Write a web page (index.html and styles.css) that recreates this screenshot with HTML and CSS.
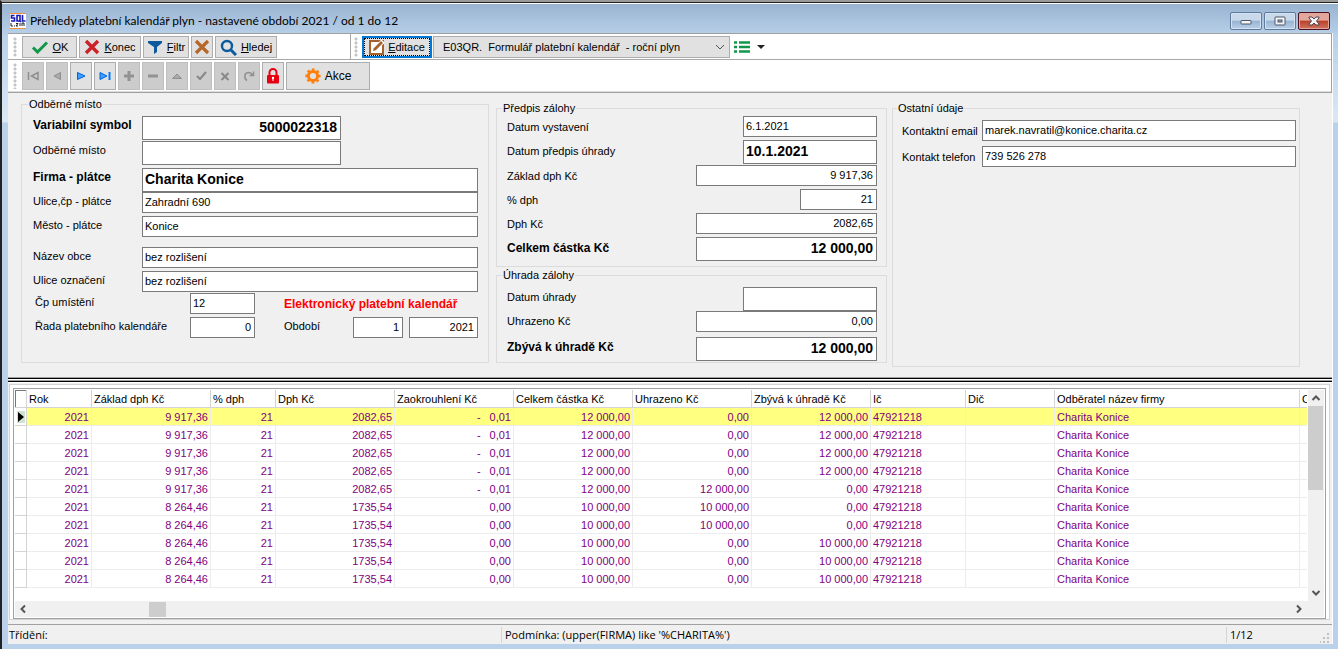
FILE: index.html
```html
<!DOCTYPE html>
<html lang="cs">
<head>
<meta charset="utf-8">
<title>Přehledy platební kalendář plyn</title>
<link rel="stylesheet" href="styles.css">
</head>
<body>
<div class="window">
  <header class="titlebar">
    <svg class="app-icon" width="16" height="16" viewBox="0 0 16 16"><rect width="16" height="16" fill="#fff"/><path d="M0 .5h16M0 15.5h16" stroke="#f0923c"/><path d="M4.500 2.500h-3v2.500h3v3h-3.500M7 2.500h3v5.500h-3zM9 7l2 2M12.500 2v6h3" fill="none" stroke="#1a1ab8" stroke-width="1.600"/><path d="M1 10v3h2M4 13h1M6 10.500h2l-2 2.500h2M10 10v3M12 13v-3h2v3" fill="none" stroke="#222"/></svg>
    <h1 class="title">Přehledy platební kalendář plyn - nastavené období 2021 / od 1 do 12</h1>
    <div class="win-buttons">
      <button class="win-btn" aria-label="Minimalizovat"><svg width="12" height="8" viewBox="0 0 12 8"><rect x="1" y="3.500" width="10" height="3.500" rx=".5" fill="#f4f4f4" stroke="#4c5466"/></svg></button>
      <button class="win-btn" aria-label="Maximalizovat"><svg width="12" height="10" viewBox="0 0 12 10"><rect x="1" y="1" width="10" height="8" rx=".5" fill="#f4f4f4" stroke="#4c5466"/><rect x="4" y="4" width="4" height="2" fill="#8fb0d8" stroke="#4c5466"/></svg></button>
      <button class="win-btn win-close" aria-label="Zavřít"><svg width="12" height="10" viewBox="0 0 12 10"><path d="M1 1h3l2 2 2-2h3v1L8.500 5 11 8v1H8L6 7 4 9H1V8l2.500-3L1 2z" fill="#f4f4f4" stroke="#4c4454"/></svg></button>
    </div>
  </header>

  <main class="client">
    <div class="toolbars">
      <div class="toolbar">
        <div class="band">
          <i class="grip"></i>
          <button class="btn btn-ok"><svg width="18" height="14" viewBox="0 0 18 14"><path d="M2 7.500l4.500 4.500L16 2.500" fill="none" stroke="#109848" stroke-width="3"/></svg><span><u>O</u>K</span></button>
          <button class="btn btn-konec"><svg width="16" height="16" viewBox="0 0 16 16"><path d="M2 2l12 12M14 2L2 14" stroke="#cc2127" stroke-width="3.400"/></svg><span><u>K</u>onec</span></button>
          <button class="btn btn-filtr"><svg width="16" height="14" viewBox="0 0 16 14"><path d="M1 1h14v2l-5 4v5l-3 2V7L1 3z" fill="#0b5a9e"/></svg><span><u>F</u>iltr</span></button>
          <button class="btn btn-x" aria-label="Zrušit filtr"><svg width="16" height="16" viewBox="0 0 16 16"><path d="M2 2l12 12M14 2L2 14" stroke="#b4682b" stroke-width="3.200"/></svg></button>
          <button class="btn btn-hledej"><svg width="17" height="17" viewBox="0 0 17 17"><circle cx="7" cy="7" r="5" fill="none" stroke="#0b5a9e" stroke-width="2.400"/><path d="M11 11l5 5" stroke="#0b5a9e" stroke-width="3"/></svg><span><u>H</u>ledej</span></button>
        </div>
        <div class="band band-right">
          <i class="grip"></i>
          <button class="btn btn-edit"><svg width="15" height="15" viewBox="0 0 15 15"><path d="M1 1h13v13H1z" fill="#fff" stroke="#a5622c" stroke-width="2"/><path d="M4 11.500L14 1" stroke="#fff" stroke-width="4.500"/><path d="M4 11l.8-2.800L12 1l2 2-7.200 7.200z" fill="#a5622c"/></svg><span><u>E</u>ditace</span></button>
          <select class="form-select" aria-label="Formulář"><option>E03QR.&nbsp; Formulář platební kalendář&nbsp; - roční plyn</option></select>
          <button class="list-btn" aria-label="Seznam"><svg width="32" height="14" viewBox="0 0 32 14"><path d="M0 2.500h3M5 2.500h11M0 7h3M5 7h11M0 11.500h3M5 11.500h11" stroke="#109848" stroke-width="2.600"/><path d="M23 5h8l-4 4z" fill="#222"/></svg></button>
        </div>
      </div>
      <div class="toolbar toolbar-nav">
        <i class="grip"></i>
        <button class="nav off" aria-label="První"><svg width="12" height="12" viewBox="0 0 12 12"><path d="M1.500 2v8M11 2.500v7L4.500 6z" fill="none" stroke="#8e8e8e" stroke-width="1.500"/></svg></button>
        <button class="nav off" aria-label="Předchozí"><svg width="12" height="12" viewBox="0 0 12 12"><path d="M9.500 2.500v7L3 6z" fill="#aaa" stroke="#8e8e8e"/></svg></button>
        <button class="nav" aria-label="Další"><svg width="12" height="12" viewBox="0 0 12 12"><path d="M2.500 2.500v7L10 6z" fill="#3da1ff" stroke="#0060e0"/></svg></button>
        <button class="nav" aria-label="Poslední"><svg width="12" height="12" viewBox="0 0 12 12"><path d="M1 2.500v7L8 6z" fill="#3da1ff" stroke="#0060e0"/><path d="M10.500 2v8" stroke="#0878f4" stroke-width="2"/></svg></button>
        <button class="nav off" aria-label="Přidat"><svg width="12" height="12" viewBox="0 0 12 12"><path d="M6 1v10M1 6h10" stroke="#929292" stroke-width="3"/></svg></button>
        <button class="nav off" aria-label="Odebrat"><svg width="12" height="12" viewBox="0 0 12 12"><path d="M1 6h10" stroke="#929292" stroke-width="3"/></svg></button>
        <button class="nav off" aria-label="Upravit"><svg width="12" height="12" viewBox="0 0 12 12"><path d="M1.500 8.500h9L6 4z" fill="#aaa" stroke="#8e8e8e"/></svg></button>
        <button class="nav off" aria-label="Potvrdit"><svg width="12" height="12" viewBox="0 0 12 12"><path d="M2 6l3 3 6-7" fill="none" stroke="#888" stroke-width="2"/></svg></button>
        <button class="nav off" aria-label="Zrušit"><svg width="12" height="12" viewBox="0 0 12 12"><path d="M2.500 3l7 7M9.500 3l-7 7" stroke="#888" stroke-width="2"/></svg></button>
        <button class="nav off" aria-label="Obnovit"><svg width="12" height="12" viewBox="0 0 12 12"><path d="M4 10.500C1 9 1 3 5 2.500c2.500 0 4 1 4.500 3M10.500 1.500v4h-4" fill="none" stroke="#929292" stroke-width="1.600"/></svg></button>
        <button class="nav" aria-label="Zámek"><svg width="14" height="16" viewBox="0 0 14 16"><path d="M3.500 8V4.500a3.500 3.500 0 0 1 7 0V8" fill="none" stroke="#e60012" stroke-width="2"/><rect x="1" y="7" width="12" height="8.500" rx="1" fill="#e60012"/><circle cx="7" cy="10" r="1.200" fill="#fff"/><path d="M7 10v3" stroke="#fff"/></svg></button>
        <button class="btn btn-akce"><svg width="16" height="16" viewBox="0 0 16 16"><circle cx="8" cy="8" r="4.600" fill="none" stroke="#ff7f0a" stroke-width="3"/><circle cx="8" cy="8" r="6.600" fill="none" stroke="#ff7f0a" stroke-width="2" stroke-dasharray="2.800 2.384" stroke-dashoffset="1.400"/></svg><span>Akce</span></button>
      </div>
    </div>

    <form class="form">
      <fieldset class="group group-place">
        <legend>Odběrné místo</legend>
        <div class="row strong"><label for="vs">Variabilní symbol</label><input id="vs" class="w-code num" value="5000022318"></div>
        <div class="row gap-1"><label for="om">Odběrné místo</label><input id="om" class="w-code tall" value=""></div>
        <div class="row gap-3 strong"><label for="firma">Firma - plátce</label><input id="firma" class="grow" value="Charita Konice"></div>
        <div class="row"><label for="ulice">Ulice,čp - plátce</label><input id="ulice" class="grow" value="Zahradní 690"></div>
        <div class="row gap-3"><label for="mesto">Město - plátce</label><input id="mesto" class="grow" value="Konice"></div>
        <div class="row gap-10"><label for="obec">Název obce</label><input id="obec" class="grow" value="bez rozlišení"></div>
        <div class="row gap-3"><label for="uo">Ulice označení</label><input id="uo" class="grow" value="bez rozlišení"></div>
        <div class="row wide gap-1"><label for="cp">Čp umístění</label><input id="cp" class="w-small" value="12"><strong class="notice">Elektronický platební kalendář</strong></div>
        <div class="row wide gap-3"><label for="rada">Řada platebního kalendáře</label><input id="rada" class="w-small num" value="0"><label class="period" for="obd">Období</label><input id="obd" class="w-month num" value="1"><input class="w-year num" aria-label="Rok" value="2021"></div>
      </fieldset>

      <div class="col-mid">
        <fieldset class="group group-sum">
          <legend>Předpis zálohy</legend>
          <div class="row"><label for="dv">Datum vystavení</label><input id="dv" class="w-date" value="6.1.2021"></div>
          <div class="row gap-3 strong-value"><label for="dp">Datum předpis úhrady</label><input id="dp" class="w-date" value="10.1.2021"></div>
          <div class="row gap-1"><label for="zd">Základ dph Kč</label><input id="zd" class="w-sum num" value="9 917,36"></div>
          <div class="row gap-3"><label for="pd">% dph</label><input id="pd" class="w-rate num" value="21"></div>
          <div class="row gap-3"><label for="dk">Dph Kč</label><input id="dk" class="w-sum num" value="2082,65"></div>
          <div class="row gap-3 strong"><label for="cc">Celkem částka Kč</label><input id="cc" class="w-sum num" value="12 000,00"></div>
        </fieldset>
        <fieldset class="group group-sum group-paid">
          <legend>Úhrada zálohy</legend>
          <div class="row"><label for="du">Datum úhrady</label><input id="du" class="w-date tall" value=""></div>
          <div class="row"><label for="uk">Uhrazeno Kč</label><input id="uk" class="w-sum num" value="0,00"></div>
          <div class="row gap-5 strong"><label for="zk">Zbývá k úhradě Kč</label><input id="zk" class="w-sum num" value="12 000,00"></div>
        </fieldset>
      </div>

      <fieldset class="group group-other">
        <legend>Ostatní údaje</legend>
        <div class="row"><label for="em">Kontaktní email</label><input id="em" class="grow" value="marek.navratil@konice.charita.cz"></div>
        <div class="row gap-5"><label for="tel">Kontakt telefon</label><input id="tel" class="grow" value="739 526 278"></div>
      </fieldset>
    </form>

    <div class="splitter"></div>

    <section class="panel">
      <div class="grid-box">
        <div class="grid-view">
          <table class="grid">
            <colgroup><col class="c-mark"><col class="c-year"><col class="c-sum"><col class="c-rate"><col class="c-sum"><col class="c-sum"><col class="c-sum"><col class="c-sum"><col class="c-sum"><col class="c-ic"><col class="c-dic"><col class="c-name"><col></colgroup>
            <thead><tr><th class="corner"></th><th>Rok</th><th>Základ dph Kč</th><th>% dph</th><th>Dph Kč</th><th>Zaokrouhlení Kč</th><th>Celkem částka Kč</th><th>Uhrazeno Kč</th><th>Zbývá k úhradě Kč</th><th>Ič</th><th>Dič</th><th>Odběratel název firmy</th><th>O</th></tr></thead>
            <tbody>
              <tr class="current"><td class="mark"><svg width="10" height="12" viewBox="0 0 10 12"><path d="M2 0h8v12H2z" fill="#cfe3cf"/><path d="M3 1l6 5-6 5z" fill="#000"/></svg></td><td>2021</td><td>9 917,36</td><td>21</td><td>2082,65</td><td><span class="neg">-</span>0,01</td><td>12 000,00</td><td>0,00</td><td>12 000,00</td><td>47921218</td><td></td><td>Charita Konice</td><td></td></tr>
              <tr><td></td><td>2021</td><td>9 917,36</td><td>21</td><td>2082,65</td><td><span class="neg">-</span>0,01</td><td>12 000,00</td><td>0,00</td><td>12 000,00</td><td>47921218</td><td></td><td>Charita Konice</td><td></td></tr>
              <tr><td></td><td>2021</td><td>9 917,36</td><td>21</td><td>2082,65</td><td><span class="neg">-</span>0,01</td><td>12 000,00</td><td>0,00</td><td>12 000,00</td><td>47921218</td><td></td><td>Charita Konice</td><td></td></tr>
              <tr><td></td><td>2021</td><td>9 917,36</td><td>21</td><td>2082,65</td><td><span class="neg">-</span>0,01</td><td>12 000,00</td><td>0,00</td><td>12 000,00</td><td>47921218</td><td></td><td>Charita Konice</td><td></td></tr>
              <tr><td></td><td>2021</td><td>9 917,36</td><td>21</td><td>2082,65</td><td><span class="neg">-</span>0,01</td><td>12 000,00</td><td>12 000,00</td><td>0,00</td><td>47921218</td><td></td><td>Charita Konice</td><td></td></tr>
              <tr><td></td><td>2021</td><td>8 264,46</td><td>21</td><td>1735,54</td><td>0,00</td><td>10 000,00</td><td>10 000,00</td><td>0,00</td><td>47921218</td><td></td><td>Charita Konice</td><td></td></tr>
              <tr><td></td><td>2021</td><td>8 264,46</td><td>21</td><td>1735,54</td><td>0,00</td><td>10 000,00</td><td>10 000,00</td><td>0,00</td><td>47921218</td><td></td><td>Charita Konice</td><td></td></tr>
              <tr><td></td><td>2021</td><td>8 264,46</td><td>21</td><td>1735,54</td><td>0,00</td><td>10 000,00</td><td>0,00</td><td>10 000,00</td><td>47921218</td><td></td><td>Charita Konice</td><td></td></tr>
              <tr><td></td><td>2021</td><td>8 264,46</td><td>21</td><td>1735,54</td><td>0,00</td><td>10 000,00</td><td>0,00</td><td>10 000,00</td><td>47921218</td><td></td><td>Charita Konice</td><td></td></tr>
              <tr><td></td><td>2021</td><td>8 264,46</td><td>21</td><td>1735,54</td><td>0,00</td><td>10 000,00</td><td>0,00</td><td>10 000,00</td><td>47921218</td><td></td><td>Charita Konice</td><td></td></tr>
            </tbody>
          </table>
          <div class="vscroll">
            <svg width="16" height="16" viewBox="0 0 16 16"><path d="M4.500 10L8 6.500 11.500 10" fill="none" stroke="#555" stroke-width="2"/></svg>
            <div class="vthumb"></div>
            <svg width="16" height="16" viewBox="0 0 16 16"><path d="M4.500 6L8 9.500 11.500 6" fill="none" stroke="#555" stroke-width="2"/></svg>
          </div>
        </div>
        <div class="hscroll">
          <svg width="16" height="16" viewBox="0 0 16 16"><path d="M10 4.500L6.500 8l3.500 3.500" fill="none" stroke="#555" stroke-width="2"/></svg>
          <div class="htrack"><div class="hthumb"></div></div>
          <svg width="16" height="16" viewBox="0 0 16 16"><path d="M6 4.500L9.500 8 6 11.500" fill="none" stroke="#555" stroke-width="2"/></svg>
        </div>
      </div>
    </section>

    <footer class="status">
      <span>Třídění:</span>
      <span>Podmínka: (upper(FIRMA) like '%CHARITA%')</span>
      <span>1/12</span>
      <svg width="12" height="12" viewBox="0 0 12 12"><path d="M7 1h2v2H7zM7 5h2v2H7zM3 5h2v2H3zM7 9h2v2H7zM3 9h2v2H3zM0 9h1v2H0z" fill="#bfbfbf"/></svg>
    </footer>
  </main>
</div>
</body>
</html>
```

FILE: styles.css
```css
* { box-sizing: border-box; }

body {
  margin: 0;
  background: #b9d1ea;
  color: #000;
  font: 11px/14px "Liberation Sans", Arial, sans-serif;
}

button, input, select { font: inherit; color: inherit; margin: 0; }

.window {
  display: flex;
  flex-direction: column;
  min-height: 100vh;
  padding: 0 5px 5px 6px;
  border-top: 2px solid #9a9a98;
  border-left: 2px solid #222;
  background: linear-gradient(#222 0 1px, #fff 1px 2px, #99b4d1 2px, #b9d1ea 34px, #dbe8f6 120px, #b9d1ea 121px);
}

/* Title bar */
.titlebar { display: flex; align-items: center; height: 31px; padding: 7px 3px 0 2px; gap: 4px; }
.title { flex: 1; margin: 0; font: 12px/16px Lato, "Open Sans", sans-serif; }
.win-buttons { display: flex; gap: 2px; }
.win-btn {
  display: flex; align-items: center; justify-content: center;
  width: 32px; height: 18px; padding: 0;
  border: 1px solid #5f7a9a; border-radius: 2px;
  background: linear-gradient(#c8d9ec 45%, #98b4d3 50%, #b8cfe8);
  box-shadow: inset 0 0 0 1px #d5e3f2;
}
.win-close { border-color: #4a1020; background: linear-gradient(#e4a79b 45%, #bb4028 50%, #cf7560); box-shadow: inset 0 0 0 1px #e2a79c; }

.client { display: flex; flex-direction: column; flex: 1; background: #f0f0f0; border-right: 1px solid #fff; }

/* Toolbars */
.toolbars { background: #fff; border: 1px solid #a0a0a0; border-left: 0; }
.toolbar { display: flex; height: 26px; border-bottom: 1px solid #a8a8a8; }
.toolbar-nav { height: 32px; padding: 2px 4px 1px; gap: 2px; border-bottom-color: #ddd; }
.band { display: flex; gap: 2px; width: 343px; padding: 2px 4px 1px; border-right: 1px solid #a8a8a8; }
.band-right { flex: 1; gap: 1px; padding-left: 2px; border-right: 0; }
.grip { width: 8px; margin: 1px 0; background: radial-gradient(circle at 3px 2px, #c4c4c4 1px, transparent 2px) 0 0 / 8px 4px; }
.btn, .nav {
  display: flex; align-items: center; justify-content: center; gap: 4px;
  padding: 0; border: 1px solid #adadad; background: #e1e1e1;
}
.btn-ok { width: 55px; }
.btn-konec { width: 62px; }
.btn-filtr { width: 46px; }
.btn-x { width: 22px; }
.btn-hledej { width: 62px; }
.btn-edit { width: 70px; border: 2px solid #0078d7; outline: 1px dotted #000; outline-offset: -3px; }
.btn-akce { width: 84px; font-size: 12px; }
.nav { width: 22px; }
.off { background: #ccc; border-color: #bfbfbf; }
.form-select {
  width: 297px; padding: 0 9px; border: 1px solid #adadad; border-radius: 0; appearance: none;
  background-color: #e1e1e1;
  background-image: url("data:image/svg+xml,%3Csvg xmlns='http://www.w3.org/2000/svg' width='10' height='6'%3E%3Cpath d='M1 1l4 4 4-4' fill='none' stroke='%23555'/%3E%3C/svg%3E");
  background-repeat: no-repeat; background-position: right 4px center;
}
.list-btn { display: flex; align-items: center; padding: 0 3px; border: 0; background: none; }

/* Detail form */
.form {
  display: grid; grid-template-columns: 468fr 393fr 408fr; column-gap: 5px; align-items: start;
  padding: 4px 32px 10px 13px;
}
.group { min-width: 0; margin: 0; border: 1px solid #dcdcdc; }
.group legend { height: 14px; padding: 0 1px; margin-left: -5px; }
.group-place { padding: 5px 10px 24px 11px; }
.col-mid { margin-top: 4px; padding-left: 2px; }
.group-sum { padding: 1px 9px 5px 10px; }
.group-paid { margin-top: 1px; padding-top: 5px; padding-bottom: 1px; }
.group-other { margin-top: 4px; padding: 5px 3px 199px 9px; }

.row { display: flex; align-items: flex-start; }
.row label { padding-top: 2px; white-space: nowrap; }
.row input { height: 21px; min-width: 0; padding: 0 3px 2px 2px; border: 1px solid #7a7a7a; border-radius: 0; background: #fff; }
.row .tall { height: 24px; }
.strong label, .notice { font-weight: bold; font-size: 12px; }
.strong input, .strong-value input { height: 24px; font-weight: bold; font-size: 14px; }
.row .num { text-align: right; }
.gap-1 { margin-top: 1px; }
.gap-3 { margin-top: 3px; }
.gap-5 { margin-top: 5px; }
.gap-10 { margin-top: 10px; }

.group-place label { width: 109px; }
.group-place .wide label { width: 157px; padding-left: 2px; }
.group-place .wide .period { width: 69px; margin-left: auto; padding-left: 0; }
.group-sum label { flex: 1; padding-top: 4px; }
.group-paid label { padding-top: 3px; }
.group-other label { width: 80px; padding-top: 4px; }
.row .grow { flex: 1; }
.w-code { width: 199px; }
.w-small { width: 65px; }
.w-month { width: 50px; }
.w-year { width: 69px; }
.w-month + .w-year { margin-left: 6px; }
.w-date { width: 134px; }
.w-sum { width: 181px; }
.w-rate { width: 77px; }
.notice { margin-left: 29px; padding-top: 4px; color: #f00; }

.splitter { height: 6px; border-top: 1px solid #a0a0a0; background: linear-gradient(#000 0 1px, #fff 1px 2px, #a0a0a0 2px 3px, #000 3px 4px, #fff 4px); }

/* Data grid */
.panel { flex: 1; display: flex; margin: 1px 2px 4px 1px; padding: 3px 3px 0; border: 1px solid #d4d4d4; background: #fff; }
.grid-box { flex: 1; display: flex; flex-direction: column; min-width: 0; padding: 1px; border: 1px solid #a0a0a0; }
.grid-view { flex: 1; display: flex; align-items: flex-start; gap: 1px; }
.grid { flex: 1; width: 0; table-layout: fixed; border-collapse: separate; border-spacing: 0; }
.c-mark { width: 12px; }
.c-year { width: 65px; }
.c-sum { width: 119px; }
.c-rate { width: 65px; }
.c-ic { width: 95px; }
.c-dic { width: 89px; }
.c-name { width: 245px; }
.grid th, .grid td {
  height: 18px; padding: 0 2px; overflow: hidden; white-space: nowrap; text-align: right;
  border-right: 1px solid #ececec; border-bottom: 1px solid #ececec;
}
.grid td { color: #800080; }
.grid th { font-weight: normal; text-align: left; border-color: #d4d4d4; }
.grid td:first-child { padding: 0; border-color: #d4d4d4; }
.grid th:last-child, .grid td:last-child { padding-right: 0; border-right: 0; }
.grid td:nth-child(n+10) { text-align: left; }
.grid .corner { box-shadow: inset 1px 1px 0 #777; }
.current td { background: #ffff80; }
.grid .mark { background: #fff; }
.mark svg { display: block; }
.neg { margin-right: 9px; }

.vscroll { align-self: stretch; display: flex; flex-direction: column; width: 16px; background: #f0f0f0; }
.vthumb { width: 15px; height: 84px; margin-bottom: auto; background: #cdcdcd; }
.hscroll { display: flex; align-items: center; height: 16px; background: #f0f0f0; padding-right: 17px; }
.htrack { flex: 1; }
.hthumb { width: 17px; height: 15px; margin-left: 9.4%; background: #cdcdcd; }

/* Status bar */
.status {
  display: grid; grid-template-columns: 493fr 725fr 106px; height: 20px; border-top: 1px solid #a0a0a0;
  font: 11px/16px "Open Sans", "Noto Sans", sans-serif; position: relative;
}
.status span { margin: 2px 0 1px; padding: 0 3px; border-left: 1px solid #d4d4d4; }
.status span:first-child { padding-left: 1px; border-left: 0; }
.status svg { position: absolute; right: 0; bottom: 0; }
```
